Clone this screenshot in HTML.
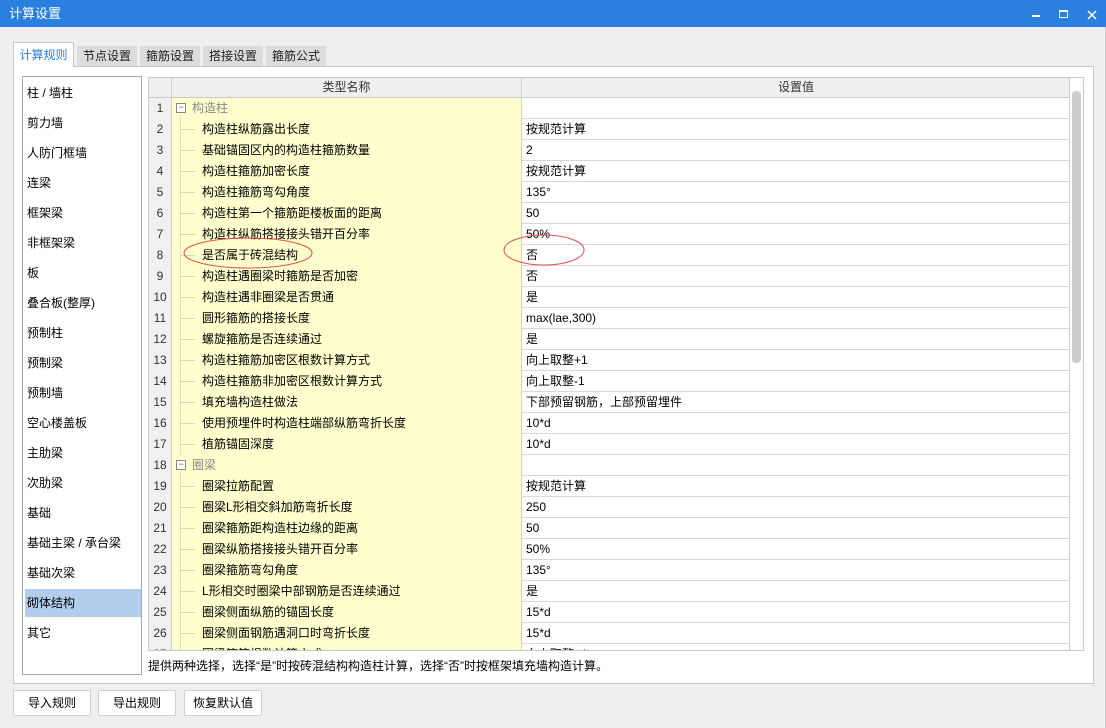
<!DOCTYPE html>
<html><head><meta charset="utf-8"><style>
*{box-sizing:border-box;margin:0;padding:0}
body{width:1106px;height:728px;background:#efefef;font-family:"Liberation Sans","Noto Sans CJK SC",sans-serif;font-size:12px;color:#000;position:relative;overflow:hidden}
.abs{position:absolute}
#title{left:0;top:0;width:1106px;height:27px;background:#2b80df;color:#fff;font-size:13px;line-height:27px;padding-left:9px}
.tab{position:absolute;top:46px;height:21px;background:#dcdcdc;line-height:21px;text-align:center;font-size:12px;color:#222}
.tab.act{top:42px;height:25px;background:#fff;border:1px solid #c8c8c8;border-bottom:none;color:#2b80df;line-height:25px;z-index:2}
#panel{left:13px;top:66px;width:1081px;height:618px;background:#fff;border:1px solid #c8c8c8}
#list{left:22px;top:76px;width:120px;height:599px;border:1px solid #a8a8a8;background:#fff}
.li{position:absolute;left:2px;width:116px;height:28px;line-height:28px;padding-left:2px;font-size:12px}
#grid{left:148px;top:77px;width:936px;height:574px;border:1px solid #c8c8c8;background:#fff;overflow:hidden}
.row{position:absolute;left:0;width:920px;height:21px;border-bottom:1px solid #d8d8d8}
.num{position:absolute;left:0;width:23px;height:21px;background:#f0f0f0;border-right:1px solid #d0d0d0;text-align:center;line-height:20px;color:#333}
.nm{position:absolute;left:23px;width:350px;height:21px;background:#ffffcd;border-right:1px solid #d0d0d0;line-height:20px}
.val{position:absolute;left:377px;line-height:20px}
.tl{position:absolute;left:8px;top:0;width:1px;height:21px;background:#e2e2c0}
.th{position:absolute;left:8px;top:10px;width:15px;height:1px;background:#d6d6c0}
.box{position:absolute;left:4px;top:5px;width:10px;height:10px;border:1px solid #888;background:#fff;font-size:9px;line-height:7px;text-align:center;color:#555}
.btn{position:absolute;top:690px;height:26px;width:78px;border:1px solid #cfcfcf;border-radius:2px;background:#fff;text-align:center;line-height:24px}
</style></head><body>
<div id="title" class="abs">计算设置</div>
<svg class="abs" style="left:1030px;top:9px" width="70" height="12"><rect x="2" y="6" width="8" height="2" fill="#fff"/><rect x="29.5" y="1.5" width="8" height="7" fill="none" stroke="#fff"/><rect x="29" y="1" width="9" height="2" fill="#fff"/><path d="M58 2L66 10M66 2L58 10" stroke="#fff" stroke-width="1.5"/></svg>
<div class="abs" style="left:1105px;top:27px;width:1px;height:701px;background:#c8c8c8"></div>
<div class="tab act" style="left:13px;width:61px">计算规则</div>
<div class="tab" style="left:77px;width:60px">节点设置</div>
<div class="tab" style="left:140px;width:60px">箍筋设置</div>
<div class="tab" style="left:203px;width:60px">搭接设置</div>
<div class="tab" style="left:266px;width:60px">箍筋公式</div>
<div id="panel" class="abs"></div>
<div id="list" class="abs">
<div class="li" style="top:2px">柱 / 墙柱</div>
<div class="li" style="top:32px">剪力墙</div>
<div class="li" style="top:62px">人防门框墙</div>
<div class="li" style="top:92px">连梁</div>
<div class="li" style="top:122px">框架梁</div>
<div class="li" style="top:152px">非框架梁</div>
<div class="li" style="top:182px">板</div>
<div class="li" style="top:212px">叠合板(整厚)</div>
<div class="li" style="top:242px">预制柱</div>
<div class="li" style="top:272px">预制梁</div>
<div class="li" style="top:302px">预制墙</div>
<div class="li" style="top:332px">空心楼盖板</div>
<div class="li" style="top:362px">主肋梁</div>
<div class="li" style="top:392px">次肋梁</div>
<div class="li" style="top:422px">基础</div>
<div class="li" style="top:452px">基础主梁 / 承台梁</div>
<div class="li" style="top:482px">基础次梁</div>
<div class="li" style="top:512px;background:#b3cdec">砌体结构</div>
<div class="li" style="top:542px">其它</div>
</div>
<div id="grid" class="abs">
<div class="row" style="top:0;height:20px;background:#efefef;border-bottom:1px solid #c8c8c8">
<div style="position:absolute;left:22px;top:0;width:1px;height:20px;background:#d0d0d0"></div>
<div style="position:absolute;left:23px;width:350px;text-align:center;line-height:19px;color:#333;border-right:1px solid #d0d0d0">类型名称</div>
<div style="position:absolute;left:374px;width:546px;text-align:center;line-height:19px;color:#333">设置值</div>
</div>
<div id="rows"></div>
<div style="position:absolute;left:920px;top:0;width:1px;height:574px;background:#d0d0d0"></div>
<div style="position:absolute;left:923px;top:13px;width:9px;height:272px;background:#cdcdcd;border-radius:4px"></div>
</div>
<div class="abs" style="left:148px;top:657px;font-size:12px">提供两种选择，选择“是”时按砖混结构构造柱计算，选择“否”时按框架填充墙构造计算。</div>
<svg class="abs" style="left:0;top:0" width="1106" height="728"><ellipse cx="248" cy="253" rx="64" ry="15" fill="none" stroke="#e05050" stroke-width="1"/><ellipse cx="544" cy="250" rx="40" ry="15" fill="none" stroke="#e05050" stroke-width="1"/></svg>
<div class="btn" style="left:13px">导入规则</div>
<div class="btn" style="left:98px">导出规则</div>
<div class="btn" style="left:184px">恢复默认值</div>
<script>
var d=[["g","构造柱",""],["c","构造柱纵筋露出长度","按规范计算"],["c","基础锚固区内的构造柱箍筋数量","2"],["c","构造柱箍筋加密长度","按规范计算"],["c","构造柱箍筋弯勾角度","135°"],["c","构造柱第一个箍筋距楼板面的距离","50"],["c","构造柱纵筋搭接接头错开百分率","50%"],["c","是否属于砖混结构","否"],["c","构造柱遇圈梁时箍筋是否加密","否"],["c","构造柱遇非圈梁是否贯通","是"],["c","圆形箍筋的搭接长度","max(lae,300)"],["c","螺旋箍筋是否连续通过","是"],["c","构造柱箍筋加密区根数计算方式","向上取整+1"],["c","构造柱箍筋非加密区根数计算方式","向上取整-1"],["c","填充墙构造柱做法","下部预留钢筋，上部预留埋件"],["c","使用预埋件时构造柱端部纵筋弯折长度","10*d"],["c","植筋锚固深度","10*d"],["g","圈梁",""],["c","圈梁拉筋配置","按规范计算"],["c","圈梁L形相交斜加筋弯折长度","250"],["c","圈梁箍筋距构造柱边缘的距离","50"],["c","圈梁纵筋搭接接头错开百分率","50%"],["c","圈梁箍筋弯勾角度","135°"],["c","L形相交时圈梁中部钢筋是否连续通过","是"],["c","圈梁侧面纵筋的锚固长度","15*d"],["c","圈梁侧面钢筋遇洞口时弯折长度","15*d"],["c","圈梁箍筋根数计算方式","向上取整+1"]];
var h="";d.forEach(function(r,i){var t=20+i*21;h+='<div class="row" style="top:'+t+'px"><div class="num">'+(i+1)+'</div><div class="nm">'+(r[0]=="g"?'<div class="box">−</div><div class="tl" style="top:16px;height:5px"></div><span style="position:absolute;left:20px;color:#888">'+r[1]+'</span>':'<div class="tl"></div><div class="th"></div><span style="position:absolute;left:30px">'+r[1]+'</span>')+'</div><div class="val">'+r[2]+'</div></div>';});
document.getElementById("rows").innerHTML=h;
</script>
</body></html>
